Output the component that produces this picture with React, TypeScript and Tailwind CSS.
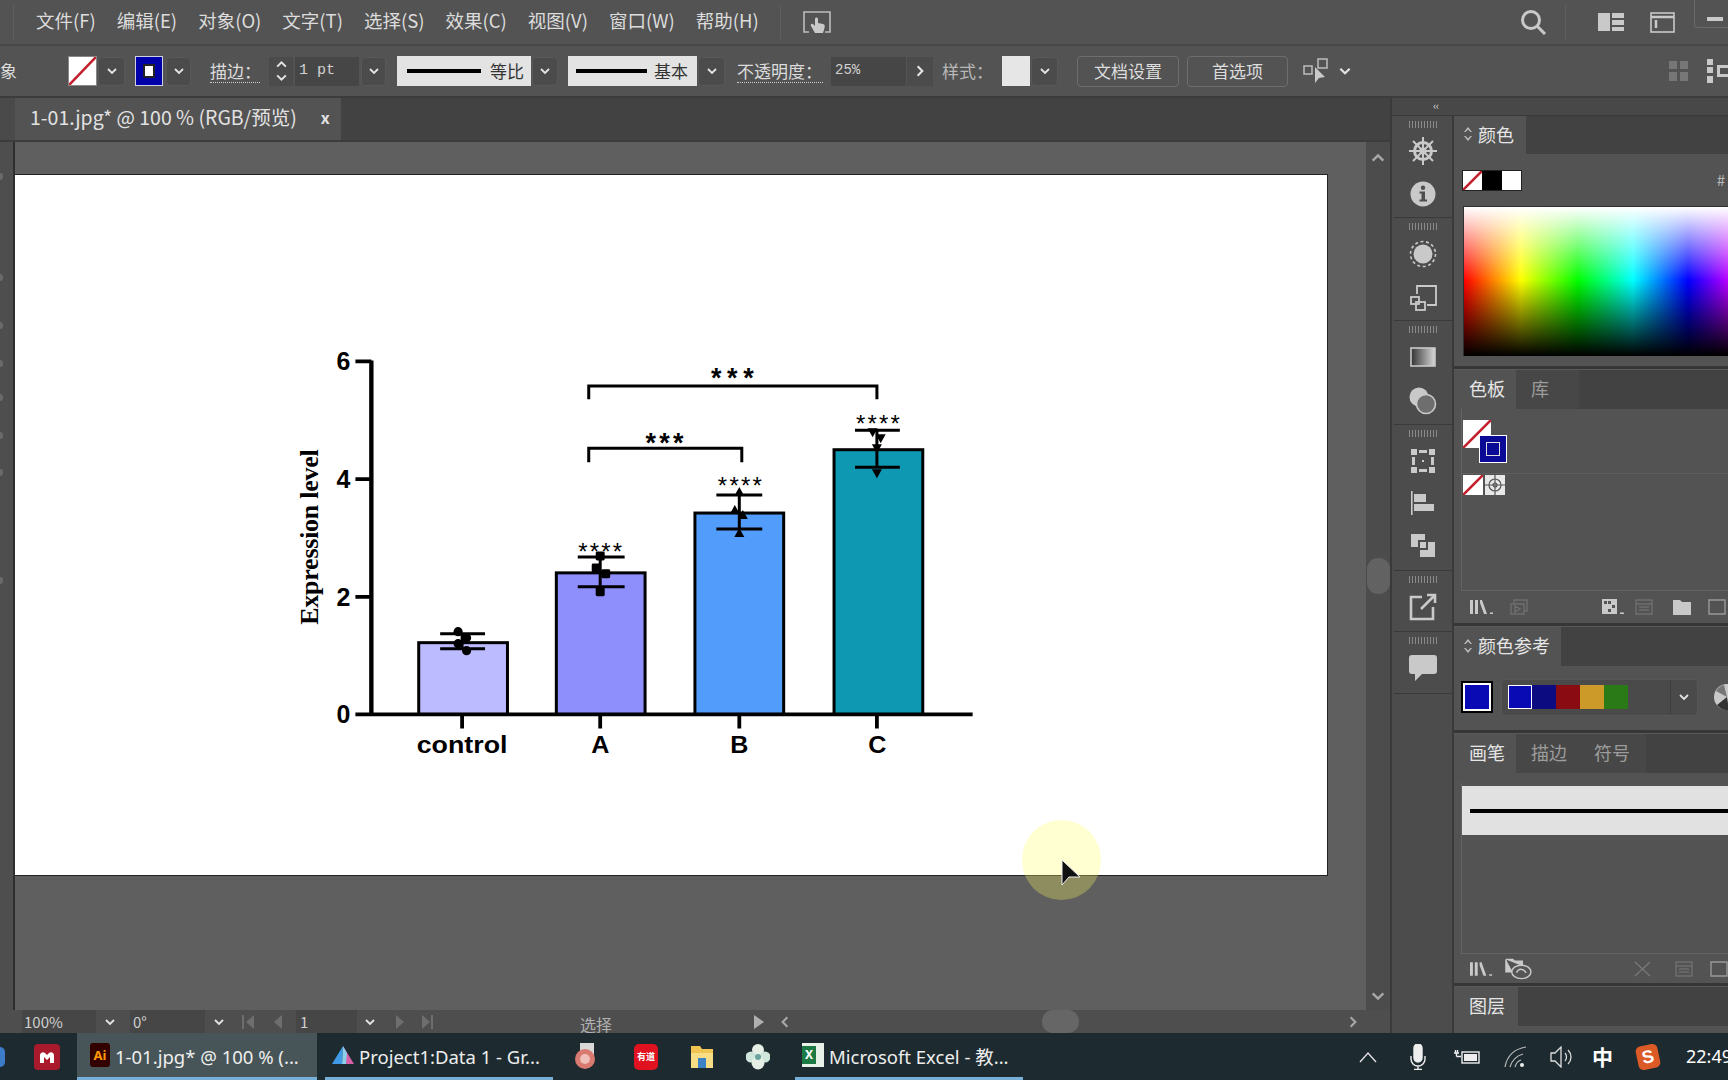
import React from "react";

const Chev = ({ c = "#e4e4e4", s = 12, dir = "down" }: { c?: string; s?: number; dir?: string }) => {
  const pts: Record<string, string> = { down: "2,4 6,8 10,4", up: "2,8 6,4 10,8", right: "4,2 8,6 4,10", left: "8,2 4,6 8,10" };
  return (
    <svg width={s} height={s} viewBox="0 0 12 12" fill="none" stroke={c} strokeWidth="1.8">
      <polyline points={pts[dir]} />
    </svg>
  );
};

const ChevBtn = ({ className = "" }: { className?: string }) => (
  <div className={`h-[29px] bg-[#4b4b4b] border border-[#585858] rounded-sm flex items-center justify-center ${className}`}>
    <Chev />
  </div>
);

const Slash = ({ w, h }: { w: number; h: number }) => (
  <svg width={w} height={h} className="block bg-white shrink-0">
    <line x1={0} y1={h} x2={w} y2={0} stroke="#c2202c" strokeWidth="2.6" />
  </svg>
);

const UpDown = () => (
  <svg width="8" height="14" viewBox="0 0 8 14" fill="#bdbdbd" className="shrink-0">
    <path d="M4 0 8 5H6.4L4 2.4 1.6 5H0ZM4 14 0 9h1.6L4 11.6 6.4 9H8Z" />
  </svg>
);

const Grip = () => (
  <div className="flex gap-[2px] justify-center pt-[5px] h-[13px] shrink-0">
    {[0, 1, 2, 3, 4, 5, 6, 7, 8, 9].map((i) => (
      <div key={i} className="w-px h-[7px] bg-[#8a8a8a]" />
    ))}
  </div>
);

const I = "#c9c9c9";
const Helm = () => (
  <svg width="30" height="30" viewBox="0 0 30 30" fill="none" stroke={I} strokeWidth="2.4">
    <circle cx="15" cy="15" r="8.5" strokeWidth="3" />
    <circle cx="15" cy="15" r="2.4" />
    <path d="M15 1v28M1 15h28M5 5l20 20M25 5 5 25" strokeWidth="2" />
  </svg>
);
const Info = () => (
  <svg width="26" height="26" viewBox="0 0 26 26">
    <circle cx="13" cy="13" r="12.5" fill={I} />
    <circle cx="13" cy="6.8" r="2.2" fill="#4f4f4f" />
    <path d="M9.5 10.5h5.5v8h2v2H9.5v-2h2v-6h-2z" fill="#4f4f4f" />
  </svg>
);
const Appear = () => (
  <svg width="28" height="28" viewBox="0 0 28 28">
    <circle cx="14" cy="14" r="9.5" fill={I} />
    <circle cx="14" cy="14" r="12.5" fill="none" stroke={I} strokeWidth="1.6" strokeDasharray="3 2.6" />
  </svg>
);
const Transform = () => (
  <svg width="27" height="26" viewBox="0 0 27 26" fill="none" stroke={I} strokeWidth="1.8">
    <path d="M7 9V1h19v19h-9" />
    <rect x="1" y="12" width="8" height="7" />
    <rect x="6" y="17" width="9" height="8" />
  </svg>
);
const Grad = () => (
  <svg width="26" height="20" viewBox="0 0 26 20">
    <defs>
      <linearGradient id="g1">
        <stop offset="0" stopColor="#333" />
        <stop offset="1" stopColor="#d8d8d8" />
      </linearGradient>
    </defs>
    <rect x="1" y="1" width="24" height="18" fill="url(#g1)" stroke={I} strokeWidth="1.6" />
  </svg>
);
const Opac = () => (
  <svg width="28" height="28" viewBox="0 0 28 28">
    <circle cx="10" cy="10" r="9.5" fill={I} />
    <circle cx="17" cy="17" r="9.5" fill="#6e6e6e" stroke={I} strokeWidth="1.6" />
  </svg>
);
const Artb = () => (
  <svg width="24" height="24" viewBox="0 0 24 24" fill={I}>
    <path d="M0 0h6v6H0zM8 1h8v3H8zM18 0h6v6h-6zM1 8h3v8H1zM20 8h3v8h-3zM0 18h6v6H0zM8 20h8v3H8zM18 18h6v6h-6zM11 11h2v2h-2z" />
  </svg>
);
const Align = () => (
  <svg width="24" height="24" viewBox="0 0 24 24" fill={I}>
    <path d="M0 0h1.6v24H0zM3 3h12v8H3zM3 13h20v7H3z" />
  </svg>
);
const Pathf = () => (
  <svg width="24" height="24" viewBox="0 0 24 24" fill={I}>
    <path d="M0 1h14v6H7v7H0zM9 9h6v6H9zM17 9h7v15H9v-7h8z" />
  </svg>
);
const Exp = () => (
  <svg width="28" height="28" viewBox="0 0 28 28" fill="none" stroke={I} strokeWidth="2.6">
    <path d="M13 4H2v22h22V14M12 16 26 2M18 2h8v8" />
  </svg>
);
const Comment = () => (
  <svg width="28" height="26" viewBox="0 0 28 26" fill={I}>
    <path d="M3 0h22a3 3 0 0 1 3 3v13a3 3 0 0 1-3 3H13l-7 7v-7H3a3 3 0 0 1-3-3V3a3 3 0 0 1 3-3z" />
  </svg>
);

const DockGroup = ({ h, children, gap }: { h: number; children: React.ReactNode; gap: string }) => (
  <div style={{ height: h }} className="border-b border-[#3a3a3a] flex flex-col shrink-0">
    <Grip />
    <div className={`flex flex-col items-center ${gap}`}>{children}</div>
  </div>
);

const PanelTabs = ({ tabs, arrows = false, w, h = "h-[39px]" }: { tabs: string[]; arrows?: boolean; w: number[]; h?: string }) => (
  <div className={`${h} bg-[#424242] flex shrink-0`}>
    {tabs.map((t, i) => (
      <div
        key={t}
        style={{ width: w[i] }}
        className={`flex items-center pb-[2px] text-[18px] ${i === 0 ? "bg-[#535353] text-[#e6e6e6]" : "bg-[#474747] text-[#9c9c9c]"} ${arrows ? "pl-[10px] gap-[6px]" : "pl-[15px]"}`}
      >
        {arrows && <UpDown />}
        <span className="whitespace-nowrap">{t}</span>
      </div>
    ))}
  </div>
);

const Divider = () => <div className="h-[4px] bg-[#363636] border-b border-[#5a5a5a] shrink-0" />;

const Lib = () => (
  <svg width="24" height="16" viewBox="0 0 24 16" fill="#c9c9c9">
    <path d="M0 1h3v14H0zM5 1h3v14H5zM10 1h2l5 14h-3l-4-11zM20 13.5h3V15h-3z" />
  </svg>
);

const PanelRowIcon = ({ d, c = "#6f6f6f", fill = false }: { d: string; c?: string; fill?: boolean }) => (
  <svg width="18" height="16" viewBox="0 0 18 16" fill={fill ? c : "none"} stroke={fill ? "none" : c} strokeWidth="1.4">
    <path d={d} />
  </svg>
);

const FILE = "M1 1h16v14H1zM1 5h16M4 8h10M4 11h10";

function Chart() {
  const bars = [
    { x: 418, top: 643, f: "#bdbbff" },
    { x: 556, top: 573, f: "#8e8efd" },
    { x: 695, top: 513, f: "#529dfb" },
    { x: 834.5, top: 449.5, f: "#0e98b1" },
  ];
  const sans = "font-['Liberation_Sans',sans-serif]";
  const err = [
    [462, 440, 485, 634, 649],
    [600.5, 578, 625, 557, 587],
    [740, 717, 763, 495, 529],
    [878, 856, 901, 430, 467],
  ];
  const tri = (x: number, y: number, up: boolean) =>
    up ? `${x},${y - 5} ${x + 5},${y + 4} ${x - 5},${y + 4}` : `${x - 5},${y - 4} ${x + 5},${y - 4} ${x},${y + 5}`;
  return (
    <svg viewBox="15 174 1313 702" className="w-full h-full block">
      {bars.map((b) => (
        <rect key={b.x} x={b.x + 0.5} y={b.top} width={89} height={715 - b.top} fill={b.f} stroke="#000" strokeWidth="3" />
      ))}
      <path d="M371 360V716" stroke="#000" strokeWidth="4.4" />
      <path d="M355 361h16M355 479h16M355 597h16M355 715h16M355 715H974" stroke="#000" strokeWidth="3.8" fill="none" />
      <path d="M462 715v14M600.5 715v14M740 715v14M878 715v14" stroke="#000" strokeWidth="3.8" />
      {[["6", 370], ["4", 488], ["2", 606], ["0", 724]].map(([t, y]) => (
        <text key={t} x={350} y={y as number} textAnchor="end" fontSize="25" fontWeight="700" className={sans}>
          {t}
        </text>
      ))}
      {[["control", 462, 1.12], ["A", 600.5, 1.05], ["B", 740, 1.05], ["C", 878.5, 1.05]].map(([t, x, s]) => (
        <text key={t as string} transform={`translate(${x} 753.5) scale(${s} 1)`} textAnchor="middle" fontSize="24" fontWeight="700" className={sans}>
          {t}
        </text>
      ))}
      <text transform="translate(317 537) rotate(-90)" textAnchor="middle" fontSize="26" fontWeight="700" textLength={176} className="font-['Liberation_Serif',serif]">
        Expression level
      </text>
      {err.map(([c, a, b, t, u]) => (
        <path key={c} d={`M${c} ${t}V${u}M${a} ${t}H${b}M${a} ${u}H${b}`} stroke="#000" strokeWidth="3" fill="none" />
      ))}
      {[[458, 632], [466.5, 638], [458, 644], [466.5, 651]].map(([x, y]) => (
        <circle key={`${x}${y}`} cx={x} cy={y} r="4.6" />
      ))}
      {[[600.5, 556], [596.5, 568], [606, 574], [600.5, 592]].map(([x, y]) => (
        <rect key={`${x}${y}`} x={x - 4.5} y={y - 4.5} width="9" height="9" rx="1.5" />
      ))}
      {[[740, 492], [735.5, 510], [743.5, 515], [740, 533]].map(([x, y]) => (
        <polygon key={`${x}${y}`} points={tri(x, y, true)} />
      ))}
      {[[873.7, 432], [881.8, 438], [878, 448], [878, 473]].map(([x, y]) => (
        <polygon key={`${x}${y}`} points={tri(x, y, false)} />
      ))}
      {[[600.5, 560], [740.5, 494], [879, 432]].map(([x, y]) => (
        <text key={x} x={x} y={y} textAnchor="middle" fontSize="24" textLength={44} lengthAdjust="spacing" className={sans}>
          ****
        </text>
      ))}
      <path d="M589 399V385.5H878V399" fill="none" stroke="#000" strokeWidth="3" />
      <path d="M589 462V448H742.5V462" fill="none" stroke="#000" strokeWidth="3" />
      <text x={733} y={387} textAnchor="middle" fontSize="27" fontWeight="700" textLength={43} className={sans}>
        ***
      </text>
      <text x={665} y={452} textAnchor="middle" fontSize="27" fontWeight="700" textLength={38} className={sans}>
        ***
      </text>
    </svg>
  );
}

const TaskItem = ({ active, w, icon, text, ml }: { active?: boolean; w: string; icon: React.ReactNode; text: string; ml: string }) => (
  <div className={`${w} ${ml} h-full shrink-0 flex items-center pl-[7px] gap-[5px] border-b-[3px] border-[#76b0d8] ${active ? "bg-[#475558]" : ""}`}>
    {icon}
    <span className="whitespace-nowrap text-[18.500px] text-[#eeeeee] translate-y-[2px]">{text}</span>
  </div>
);

export default function App() {
  const menus = ["文件(F)", "编辑(E)", "对象(O)", "文字(T)", "选择(S)", "效果(C)", "视图(V)", "窗口(W)", "帮助(H)"];
  return (
    <div className="relative w-[1728px] h-[1080px] overflow-hidden flex flex-col bg-[#535353] text-[#dcdcdc] font-['Noto_Sans_CJK_SC','Noto_Sans',sans-serif]">
      {/* menu bar */}
      <div className="h-[46px] shrink-0 flex items-center border-b-2 border-[#474747] text-[18.500px] relative">
        <div className="w-px h-[34px] bg-[#5e5e5e] ml-[13px]" />
        <div className="flex gap-[21px] ml-[22px] whitespace-nowrap -mt-[3px]">
          {menus.map((m) => (
            <span key={m}>{m}</span>
          ))}
        </div>
        <div className="w-px h-[34px] bg-[#5e5e5e] ml-[21px]" />
        <svg width="28" height="22" viewBox="0 0 28 22" className="ml-[22px]" fill="none" stroke="#bdbdbd" strokeWidth="1.6">
          <path d="M8 1H1v20h5M20 1h7v20h-5M8 1h12" />
          <path d="M12 8c0-2 3-2 3 0v4l5 1c2 .5 2 2 1.5 4l-1.5 5h-8l-4-7c-1-1.500 1-3 2-2l2 2z" fill="#c9c9c9" stroke="none" />
        </svg>
        <svg width="28" height="26" viewBox="0 0 28 26" fill="none" stroke="#c9c9c9" strokeWidth="3" className="ml-auto mr-[17px]">
          <circle cx="11" cy="11" r="8.500" />
          <path d="M17 17l8 8" />
        </svg>
        <div className="w-px h-[34px] bg-[#5e5e5e] mr-[32px]" />
        <svg width="26" height="18" viewBox="0 0 26 18" fill="#c9c9c9" className="mr-[26px]">
          <path d="M0 0h12v18H0zM14 0h12v5H14zM14 7h12v5H14zM14 14h12v4H14z" />
        </svg>
        <svg width="25" height="21" viewBox="0 0 25 21" fill="none" stroke="#c9c9c9" strokeWidth="1.600" className="mr-[19px]">
          <rect x="1" y="1" width="23" height="19" />
          <path d="M1 5h23M6 8v8" strokeWidth="2.500" />
        </svg>
        <div className="w-[34px] h-[28px] self-start border-l border-b border-[#6a6a6a] rounded-bl-sm flex items-end justify-end pb-[6px]">
          <div className="w-[16px] h-[4px] bg-[#c9c9c9] mr-[5px]" />
        </div>
      </div>

      {/* control bar */}
      <div className="h-[52px] shrink-0 flex items-center border-b-2 border-[#3c3c3c] text-[17px] whitespace-nowrap">
        <div className="w-[17px] overflow-hidden">象</div>
        <div className="ml-[51px] border border-[#888]">
          <Slash w={27} h={28} />
        </div>
        <ChevBtn className="w-[27px] ml-px" />
        <div className="ml-[10px] w-[28px] h-[30px] bg-[#0000a8] border border-[#cfcfe6] flex items-center justify-center">
          <div className="w-[12px] h-[14px] bg-white border-2 border-[#222]" />
        </div>
        <ChevBtn className="w-[25px] ml-[3px]" />
        <div className="ml-[19px] w-[50px] border-b border-dotted border-[#cfcfcf] leading-[22px]">描边：</div>
        <div className="ml-[9px] w-[24px] h-[29px] flex flex-col items-center justify-center bg-[#4b4b4b]">
          <Chev dir="up" s={13} />
          <Chev s={13} />
        </div>
        <div className="ml-[2px] w-[64px] h-[29px] bg-[#464646] pl-[4px] text-[15px] leading-[27px] text-[#d2d2d2] font-['Liberation_Mono',monospace]">1 pt</div>
        <ChevBtn className="w-[25px] ml-[2px]" />
        <div className="ml-[11px] w-[134px] h-[30px] bg-[#e3e3e3] flex items-center pl-[10px] text-[#333]">
          <div className="w-[74px] h-[4px] bg-black" />
          <span className="ml-[9px]">等比</span>
        </div>
        <ChevBtn className="w-[26px] ml-px" />
        <div className="ml-[10px] w-[129px] h-[30px] bg-[#e3e3e3] flex items-center pl-[8px] text-[#333]">
          <div className="w-[71px] h-[4px] bg-black" />
          <span className="ml-[7px]">基本</span>
        </div>
        <ChevBtn className="w-[27px] ml-px" />
        <div className="ml-[12px] w-[86px] border-b border-dotted border-[#cfcfcf] leading-[22px]">不透明度：</div>
        <div className="ml-[8px] w-[75px] h-[29px] bg-[#464646] pl-[4px] text-[14px] leading-[26px] text-[#d2d2d2] font-['Liberation_Mono',monospace]">25%</div>
        <div className="w-[26px] ml-px h-[29px] bg-[#4b4b4b] flex items-center justify-center">
          <Chev dir="right" s={14} />
        </div>
        <div className="ml-[9px] w-[50px] text-[#b8b8b8]">样式：</div>
        <div className="ml-[10px] w-[28px] h-[30px] bg-[#e6e6e6]" />
        <ChevBtn className="w-[27px] ml-px" />
        <div className="ml-[19px] w-[102px] h-[31px] border border-[#6e6e6e] rounded-sm flex items-center justify-center text-[17px]">文档设置</div>
        <div className="ml-[8px] w-[101px] h-[31px] border border-[#6e6e6e] rounded-sm flex items-center justify-center text-[17px]">首选项</div>
        <svg width="28" height="28" viewBox="0 0 28 28" className="ml-[15px]" fill="none" stroke="#bdbdbd" strokeWidth="1.500">
          <rect x="1" y="9" width="8" height="8" />
          <rect x="15" y="2" width="9" height="9" />
          <path d="M12 10v16l4-5 6-1z" fill="#c9c9c9" stroke="none" />
        </svg>
        <div className="ml-[7px]">
          <Chev s={14} />
        </div>
        <svg width="19" height="20" viewBox="0 0 19 20" fill="#777" className="ml-auto mr-[19px]">
          <path d="M0 0h8v8H0zM11 0h8v8h-8zM0 11h8v9H0zM11 11h8v9h-8z" />
        </svg>
        <svg width="21" height="24" viewBox="0 0 21 24" fill="#c9c9c9">
          <path d="M0 0h6v6H0zM0 8h6v6H0zM0 17h6v7H0zM10 6h11v3H13v6h8v3H10z" />
        </svg>
      </div>

      {/* main */}
      <div className="flex-1 min-h-0 flex">
        <div className="w-[1390px] shrink-0 flex flex-col">
          <div className="h-[44px] shrink-0 bg-[#424242] flex border-b-2 border-[#3c3c3c]">
            <div className="w-[15px] bg-[#4a4a4a]" />
            <div className="w-[326px] bg-[#535353] flex items-center pl-[15px] pb-[4px] text-[19.500px] text-[#e2e2e2] whitespace-nowrap">
              <span>1-01.jpg* @ 100 % (RGB/预览)</span>
              <span className="ml-[24px] text-[16px] font-bold">x</span>
            </div>
          </div>
          <div className="flex-1 min-h-0 flex">
            <div className="w-[15px] bg-[#4e4e4e] border-r-2 border-[#2e2e2e] shrink-0 flex flex-col">
              {[31, 94, 41, 31, 27, 31, 30, 101].map((m, i) => (
                <div key={i} style={{ marginTop: m }} className="w-[3px] h-[7px] bg-[#6a6a6a] rounded-r-sm" />
              ))}
            </div>
            <div className="flex-1 bg-[#5f5f5f] pt-[32px]">
              <div className="w-[1313px] h-[702px] bg-white border-b border-r border-t border-[#222]">
                <Chart />
              </div>
            </div>
            <div className="w-[24px] shrink-0 bg-[#4c4c4c] flex flex-col items-center pt-[8px] pb-[6px]">
              <Chev dir="up" c="#a8a8a8" s={16} />
              <div className="mt-[392px] w-[23px] h-[36px] rounded-[11px] bg-[#626262]" />
              <div className="mt-auto">
                <Chev c="#a8a8a8" s={16} />
              </div>
            </div>
          </div>
          <div className="h-[23px] shrink-0 bg-[#4e4e4e] flex items-center text-[15px] text-[#cfcfcf] whitespace-nowrap relative">
            <div className="ml-[22px] w-[74px] h-full bg-[#464646] pl-[2px] leading-[23px]">100%</div>
            <div className="w-[27px] flex justify-center">
              <Chev />
            </div>
            <div className="ml-[7px] w-[75px] h-full bg-[#464646] pl-[3px] leading-[23px]">0°</div>
            <div className="w-[27px] flex justify-center">
              <Chev />
            </div>
            <svg width="44" height="14" viewBox="0 0 44 14" fill="#6e6e6e" className="ml-[10px]">
              <path d="M0 0h2v14H0zM12 0v14L4 7zM40 0v14l-8-7z" />
            </svg>
            <div className="ml-[10px] w-[61px] h-full bg-[#464646] pl-[4px] leading-[23px]">1</div>
            <div className="w-[25px] flex justify-center">
              <Chev />
            </div>
            <svg width="44" height="14" viewBox="0 0 44 14" fill="#6e6e6e" className="ml-[14px]">
              <path d="M0 0v14l8-7zM26 0v14l8-7zM35 0h2v14h-2z" />
            </svg>
            <div className="ml-[140px] text-[#b0b0b0] text-[16px] leading-none translate-y-[2px]">选择</div>
            <svg width="10" height="14" viewBox="0 0 10 14" fill="#b0b0b0" className="ml-[142px]">
              <path d="M0 0v14l10-7z" />
            </svg>
            <div className="ml-[14px]">
              <Chev dir="left" c="#a8a8a8" s={14} />
            </div>
            <div className="ml-[250px] w-[37px] h-[23px] rounded-[11px] bg-[#666]" />
            <div className="ml-[267px]">
              <Chev dir="right" c="#a8a8a8" s={14} />
            </div>
          </div>
        </div>

        {/* right */}
        <div className="flex-1 min-w-0 flex flex-col border-l-2 border-[#3a3a3a]">
          <div className="h-[18px] shrink-0 bg-[#484848] border-b border-[#3a3a3a] text-[11px] text-[#ddd] leading-[15px] pl-[41px] tracking-tighter">‹‹</div>
          <div className="flex-1 min-h-0 flex">
            <div className="w-[62px] shrink-0 pl-[2px] bg-[#4c4c4c] border-r-2 border-[#3a3a3a] flex flex-col">
              <DockGroup h={102} gap="gap-[15px] pt-[7px]"><Helm /><Info /></DockGroup>
              <DockGroup h={103} gap="gap-[17px] pt-[9px]"><Appear /><Transform /></DockGroup>
              <DockGroup h={104} gap="gap-[20px] pt-[13px]"><Grad /><Opac /></DockGroup>
              <DockGroup h={146} gap="gap-[18px] pt-[11px]"><Artb /><Align /><Pathf /></DockGroup>
              <DockGroup h={61} gap="pt-[9px]"><Exp /></DockGroup>
              <DockGroup h={62} gap="pt-[10px]"><Comment /></DockGroup>
            </div>
            <div className="flex-1 min-w-0 flex flex-col overflow-hidden">
              {/* colour */}
              <PanelTabs tabs={["颜色"]} arrows w={[72]} h="h-[38px]" />
              <div className="h-[212px] shrink-0 pl-[8px] relative">
                <div className="flex items-center h-[52px] pt-[4px]">
                  <div className="flex border border-[#222] -mt-[4px]">
                    <Slash w={19} h={19} />
                    <div className="w-[20px] h-[19px] bg-black" />
                    <div className="w-[19px] h-[19px] bg-white" />
                  </div>
                  <span className="ml-auto mr-[3px] text-[15px] text-[#bbb] -mt-[3px]">#</span>
                </div>
                <div className="ml-[1px] h-[150px] border-t border-l border-[#2f2f2f] bg-[linear-gradient(to_bottom,#fff_0%,rgba(255,255,255,0)_49%,rgba(0,0,0,0)_49%,#000_100%),linear-gradient(to_right,#f00_0,#ff0_57px,#0f0_114px,#0ff_169px,#00f_224px,#f0f_279px)]" />
              </div>
              <Divider />
              {/* swatches */}
              <PanelTabs tabs={["色板", "库"]} w={[62, 63]} />
              <div className="h-[182px] shrink-0 ml-[7px] border-l border-b border-[#646464] flex flex-col relative">
                <div className="h-[65px] shrink-0 border-b border-[#5f5f5f] pt-[11px] pl-px relative">
                  <Slash w={28} h={28} />
                  <div className="absolute left-[17px] top-[26px] w-[28px] h-[28px] bg-[#0a0a96] border border-white flex items-center justify-center">
                    <div className="w-[14px] h-[14px] border border-[#ddd]" />
                  </div>
                </div>
                <div className="flex gap-[2px] pl-px pt-[1px]">
                  <Slash w={20} h={20} />
                  <svg width="20" height="20" viewBox="0 0 20 20" className="bg-[#e8e8e8]" fill="none" stroke="#555" strokeWidth="1.200">
                    <circle cx="10" cy="10" r="6" />
                    <circle cx="10" cy="10" r="2" />
                    <path d="M10 0v20M0 10h20" />
                  </svg>
                </div>
              </div>
              <div className="h-[32px] shrink-0 flex items-center pl-[16px] relative">
                <Lib />
                <div className="ml-[16px]"><PanelRowIcon d="M4 4V1h13v11h-3M1 5h13v10H1zM5 7v6l5-3z" /></div>
                <div className="ml-[74px]">
                  <svg width="22" height="16" viewBox="0 0 22 16" fill="#c9c9c9"><path d="M0 0h15v15H0zM2 2v3h3V2zM6 2v3h3V2zM10 6v3h3V6zM6 10v3h3v-3zM18 13.500h4V15h-4z" fillRule="evenodd" /></svg>
                </div>
                <div className="ml-[11px]"><PanelRowIcon d={FILE} /></div>
                <div className="ml-[20px]"><PanelRowIcon d="M0 1h7l2 2h9v13H0z" c="#c9c9c9" fill /></div>
                <div className="ml-[17px]"><PanelRowIcon d="M1 1h16v14H1z" c="#999" /></div>
              </div>
              <Divider />
              {/* guide */}
              <PanelTabs tabs={["颜色参考"]} arrows w={[107]} />
              <div className="h-[64px] shrink-0 flex items-center pl-[7px] -translate-y-px">
                <div className="w-[32px] h-[32px] bg-black p-[2px] shrink-0">
                  <div className="w-full h-full border-2 border-white bg-[#0a0ab4] outline outline-black" />
                </div>
                <div className="ml-[8px] w-[197px] h-[37px] bg-[#4a4a4a] rounded-sm flex items-center pl-[6px] shrink-0 border border-[#575757]">
                  <div className="w-[24px] h-[24px] bg-[#0a0ab4] border border-white" />
                  <div className="w-[24px] h-[24px] bg-[#0c0c80]" />
                  <div className="w-[24px] h-[24px] bg-[#8a0c12]" />
                  <div className="w-[24px] h-[24px] bg-[#cc9a28]" />
                  <div className="w-[24px] h-[24px] bg-[#2a7a18]" />
                  <div className="ml-auto w-[27px] h-full border-l border-[#3e3e3e] flex items-center justify-center">
                    <Chev />
                  </div>
                </div>
                <svg width="28" height="28" viewBox="0 0 28 28" className="ml-[15px] shrink-0">
                  <circle cx="14" cy="14" r="13" fill="#c9c9c9" />
                  <path d="M14 14 4 22a13 13 0 0 0 12 5z" fill="#333" />
                  <path d="M14 14 3 8a13 13 0 0 1 8-6z" fill="#777" />
                </svg>
              </div>
              <Divider />
              {/* brushes */}
              <PanelTabs tabs={["画笔", "描边", "符号"]} w={[62, 63, 67]} />
              <div className="h-[171px] shrink-0 ml-[7px] mt-[10px] border-l border-b border-[#646464]">
                <div className="mt-[3px] h-[49px] bg-[#e1e1e1] flex items-center pl-[8px]">
                  <div className="h-[4px] flex-1 bg-black" />
                </div>
              </div>
              <div className="h-[29px] shrink-0 flex items-center pl-[16px]">
                <Lib />
                <svg width="28" height="22" viewBox="0 0 28 22" className="ml-[12px]" fill="none" stroke="#c9c9c9" strokeWidth="1.500">
                  <path d="M1 1h7l2 2h8v5M1 1v13h7" fill="#c9c9c9" />
                  <ellipse cx="17" cy="14" rx="10" ry="7" fill="#555" />
                  <path d="M12 15c2-5 7-5 10 0" />
                </svg>
                <div className="ml-[102px]"><PanelRowIcon d="M1 1l15 14M16 1 1 15" c="#777" /></div>
                <div className="ml-[23px]"><PanelRowIcon d={FILE} /></div>
                <div className="ml-[17px]"><PanelRowIcon d="M1 1h16v14H1z" c="#999" /></div>
              </div>
              <Divider />
              {/* layers */}
              <PanelTabs tabs={["图层"]} w={[64]} />
            </div>
          </div>
        </div>
      </div>

      {/* taskbar */}
      <div className="h-[47px] shrink-0 bg-[#1d2b30] flex items-center relative font-['Noto_Sans','Noto_Sans_CJK_SC',sans-serif]">
        <div className="w-[5px] h-[20px] rounded-r-full bg-[#3d7cc9] shrink-0" />
        <div className="ml-[29px] w-[26px] h-[26px] rounded-[4px] bg-[#a91a2c] flex items-center justify-center shrink-0">
          <svg width="18" height="14" viewBox="0 0 18 14" fill="white">
            <path d="M2 13V5a3 3 0 0 1 5-2l2 2 2-2a3 3 0 0 1 5 2v8h-4V7L9 10 6 7v6z" />
          </svg>
        </div>
        <TaskItem
          active
          ml="ml-[17px]"
          w="w-[240px] pl-[13px]"
          icon={
            <div className="w-[20px] h-[24px] rounded-[3px] bg-[#330000] text-[#ff9a00] text-[13px] font-bold leading-[24px] text-center shrink-0">Ai</div>
          }
          text="1-01.jpg* @ 100 % (..."
        />
        <TaskItem
          ml="ml-[8px]"
          w="w-[228px]"
          icon={
            <svg width="22" height="18" viewBox="0 0 22 18" className="shrink-0">
              <path d="M11 0 22 18H14Z" fill="#d85fa8" />
              <path d="M11 0 0 18H10Z" fill="#3f9be8" />
              <path d="M11 0 10 18H14L15 7Z" fill="#8bd0e8" />
            </svg>
          }
          text="Project1:Data 1 - Gr..."
        />
        <svg width="22" height="28" viewBox="0 0 22 28" className="ml-[22px] shrink-0">
          <rect x="5" y="0" width="14" height="20" fill="#d8d8d8" />
          <circle cx="10" cy="16" r="10" fill="#d97a70" />
          <circle cx="10" cy="16" r="5" fill="#eec0b8" />
        </svg>
        <div className="ml-[37px] w-[24px] h-[26px] rounded-[5px] bg-[#e0121f] text-white text-[9px] font-bold leading-[26px] text-center shrink-0 font-['Noto_Sans_CJK_SC',sans-serif]">有道</div>
        <svg width="24" height="24" viewBox="0 0 24 24" className="ml-[32px] shrink-0">
          <path d="M1 1h9l2 3h11v19H1z" fill="#f0c552" />
          <rect x="1" y="8" width="22" height="15" fill="#f7dd84" />
          <rect x="8" y="13" width="8" height="10" fill="#3c82c4" />
        </svg>
        <svg width="24" height="26" viewBox="0 0 24 26" className="ml-[32px] shrink-0">
          <circle cx="12" cy="6" r="6" fill="#e5efe6" />
          <circle cx="5" cy="13" r="5.500" fill="#cfe6dc" />
          <circle cx="19" cy="13" r="5.500" fill="#cfe6dc" />
          <circle cx="12" cy="19" r="6.500" fill="#e5efe6" />
          <circle cx="12" cy="13" r="3" fill="#6aa3a0" />
        </svg>
        <TaskItem
          ml="ml-[25px]"
          w="w-[228px]"
          icon={
            <div className="w-[22px] h-[24px] bg-[#e8f2e8] relative shrink-0">
              <div className="absolute left-0 top-[3px] w-[14px] h-[18px] bg-[#1e7a44] text-white text-[12px] font-bold leading-[18px] text-center">X</div>
            </div>
          }
          text="Microsoft Excel - 教..."
        />
        <div className="ml-auto flex items-center shrink-0 text-white">
          <svg width="18" height="12" viewBox="0 0 18 12" fill="none" stroke="#e4e4e4" strokeWidth="1.300" className="mr-[33px]">
            <path d="M1 11 9 2l8 9" />
          </svg>
          <svg width="16" height="26" viewBox="0 0 16 26" className="mr-[28px]" fill="none" stroke="#eee" strokeWidth="1.400">
            <rect x="4" y="0" width="8" height="18" rx="4" fill="#eee" />
            <path d="M1 12v3a7 7 0 0 0 14 0v-3M8 22v3M4 25.500h8" />
          </svg>
          <svg width="26" height="14" viewBox="0 0 26 14" className="mr-[24px]" fill="none" stroke="#eee" strokeWidth="1.400">
            <path d="M0 3h5M1.500 0v3M3.500 0v3M2.500 3v3.500M2.500 6.500H7" />
            <rect x="8" y="2" width="17" height="11" />
            <rect x="10" y="4" width="13" height="7" fill="#eee" stroke="none" />
          </svg>
          <svg width="24" height="22" viewBox="0 0 24 22" className="mr-[22px]" fill="none" stroke="#bbb" strokeWidth="1.200">
            <path d="M1 21C3 10 10 3 22 1M6 21c2-7 6-11 13-13M11 21c1-4 3-6 6-7" />
            <circle cx="18" cy="19" r="2" fill="#eee" stroke="none" />
          </svg>
          <svg width="24" height="22" viewBox="0 0 24 22" className="mr-[18px]" fill="none" stroke="#ddd" strokeWidth="1.300">
            <path d="M1 7h4l6-6v20l-6-6H1zM15 7c2 2 2 6 0 8M18 4c4 4 4 10 0 14" />
          </svg>
          <span className="text-[21px] font-bold mr-[24px] font-['Noto_Sans_CJK_SC',sans-serif]">中</span>
          <div className="w-[22px] h-[24px] rounded-[5px] bg-[#dc5a26] -rotate-[12deg] text-white font-bold text-[18px] leading-[24px] text-center mr-[27px] font-['Liberation_Sans',sans-serif]">S</div>
          <span className="text-[18px] w-[42px] whitespace-nowrap">22:49</span>
        </div>
      </div>

      {/* mouse highlight + cursor, lying over the canvas */}
      <div className="absolute left-[1022px] top-[820px] w-[79px] h-[80px] rounded-full bg-[rgba(255,255,95,0.29)]" />
      <svg width="20" height="28" viewBox="0 0 20 28" className="absolute left-[1061px] top-[859px]">
        <path d="M1 1v25l7-8h11z" fill="#111" stroke="#f0f0f0" strokeWidth="1" />
      </svg>
    </div>
  );
}
